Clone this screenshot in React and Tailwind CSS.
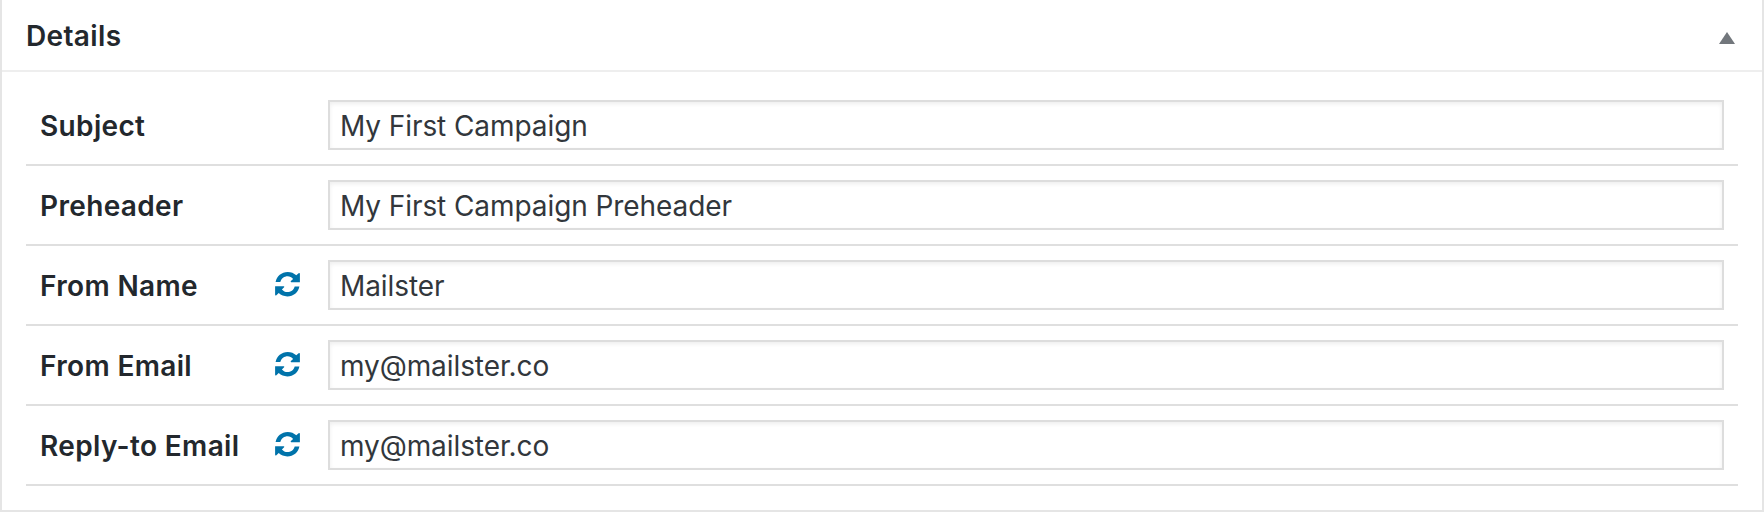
const rows = [
  { label: "Subject", value: "My First Campaign" },
  { label: "Preheader", value: "My First Campaign Preheader" },
  { label: "From Name", value: "Mailster", sync: true },
  { label: "From Email", value: "my@mailster.co", sync: true },
  { label: "Reply-to Email", value: "my@mailster.co", sync: true },
];

function SyncIcon() {
  const half = "M0.6 10C1.6 4.2 6.6 0 12.7 0C16.1 0 18.9 1.2 21.3 3.3L23.6 1.2Q24.9 0.5 24.9 1.9V10.2H16.2Q15.2 9.9 15.9 9.1L18.1 6.9C16.6 5.2 14.8 4.3 12.7 4.3C9.2 4.3 6.4 6.4 5.3 10Z";
  return (
    <svg className="mb-1 h-[25px] w-[25px] text-[#0073aa]" viewBox="0 0 25 25" fill="currentColor">
      <path d={half} />
      <path d={half} transform="rotate(180 12.5 12.2)" />
    </svg>
  );
}

function Row({ label, value, sync }) {
  return (
    <div className="flex h-20 items-center border-b-2 border-[#dfdfdf] pr-3.5 pl-3.5">
      <label className="flex w-[288px] shrink-0 items-center justify-between pt-0.5 pr-[28px] text-[28px] leading-[50px] font-semibold tracking-[0.35px] whitespace-nowrap text-[#23282d]">
        {label}
        {sync && <SyncIcon />}
      </label>
      <div className="h-[50px] min-w-0 flex-1 border-2 border-[#dddddd] bg-white pl-[10px] text-[28px] leading-[48px] tracking-[-0.08px] whitespace-nowrap text-[#32373c] shadow-[inset_0_2px_4px_rgba(0,0,0,0.07)]">
        {value}
      </div>
    </div>
  );
}

export default function App() {
  return (
    <section className="h-[512px] w-[1764px] border-x-2 border-b-2 border-[#e5e5e5] bg-white font-['Inter',sans-serif]">
      <header className="flex h-[72px] items-center justify-between border-b-2 border-[#eeeeee] pr-[27px] pl-6">
        <h2 className="pt-0.5 text-[28px] leading-10 font-semibold tracking-[0.35px] text-[#23282d]">Details</h2>
        <svg className="mt-1.5 h-3 w-4 text-[#72777c]" viewBox="0 0 16 12" fill="currentColor">
          <path d="M8 0L16 12H0Z" />
        </svg>
      </header>
      <div className="px-6 pt-3.5">
        {rows.map((row) => (
          <Row key={row.label} {...row} />
        ))}
      </div>
    </section>
  );
}
